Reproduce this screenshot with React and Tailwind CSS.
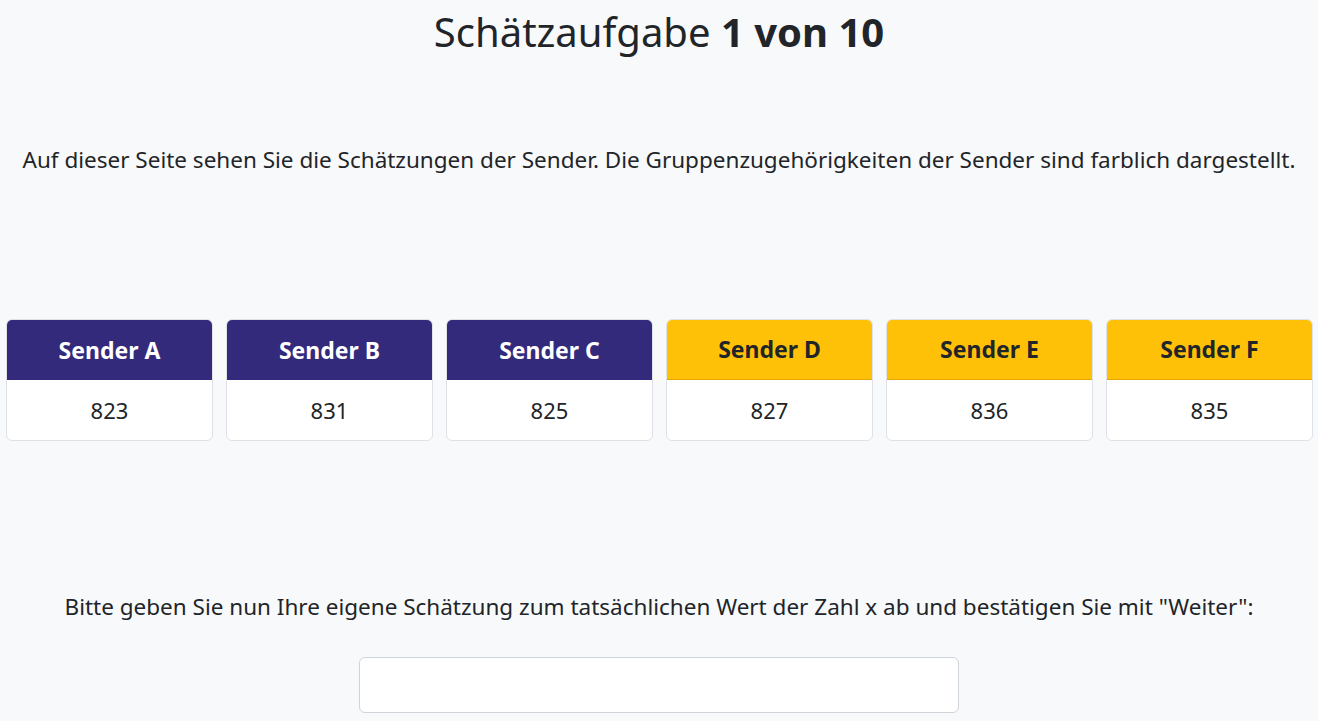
const senders = [
  { name: "Sender A", value: 823, group: "blue" },
  { name: "Sender B", value: 831, group: "blue" },
  { name: "Sender C", value: 825, group: "blue" },
  { name: "Sender D", value: 827, group: "yellow" },
  { name: "Sender E", value: 836, group: "yellow" },
  { name: "Sender F", value: 835, group: "yellow" },
];

function SenderCard({ sender }) {
  const isBlue = sender.group === "blue";

  return (
    <div className="overflow-hidden rounded-md border border-[#dee2e6] bg-white">
      <div
        className={
          isBlue
            ? "flex h-[60px] items-center justify-center bg-[#332a7b] text-[23px] font-bold text-white"
            : "flex h-[60px] items-center justify-center border-b border-[#e0a800] bg-[#ffc107] text-[23px] font-bold text-[#212529]"
        }
      >
        {sender.name}
      </div>
      <div className="flex h-[60px] items-center justify-center text-[22px] text-[#212529]">
        {sender.value}
      </div>
    </div>
  );
}

export default function App() {
  return (
    <div className="min-h-screen bg-[#f8f9fa] font-['Noto_Sans',sans-serif] text-[#212529]">
      <h1 className="pt-[8px] text-center text-[40px] leading-[48px]">
        Schätzaufgabe <span className="font-bold">1 von 10</span>
      </h1>

      <p className="mt-[89px] text-center text-[22.5px] leading-[30px]">
        Auf dieser Seite sehen Sie die Schätzungen der Sender. Die
        Gruppenzugehörigkeiten der Sender sind farblich dargestellt.
      </p>

      <div className="mt-[144px] grid grid-cols-6 gap-[13px] pl-[6px] pr-[5px]">
        {senders.map((sender) => (
          <SenderCard key={sender.name} sender={sender} />
        ))}
      </div>

      <p className="mt-[151px] text-center text-[22.5px] leading-[30px]">
        Bitte geben Sie nun Ihre eigene Schätzung zum tatsächlichen Wert der
        Zahl x ab und bestätigen Sie mit "Weiter":
      </p>

      <div className="mt-[35px] flex justify-center">
        <input
          type="text"
          className="h-[56px] w-[600px] rounded-md border border-[#ced4da] bg-white px-3 text-[20px]"
        />
      </div>
    </div>
  );
}
